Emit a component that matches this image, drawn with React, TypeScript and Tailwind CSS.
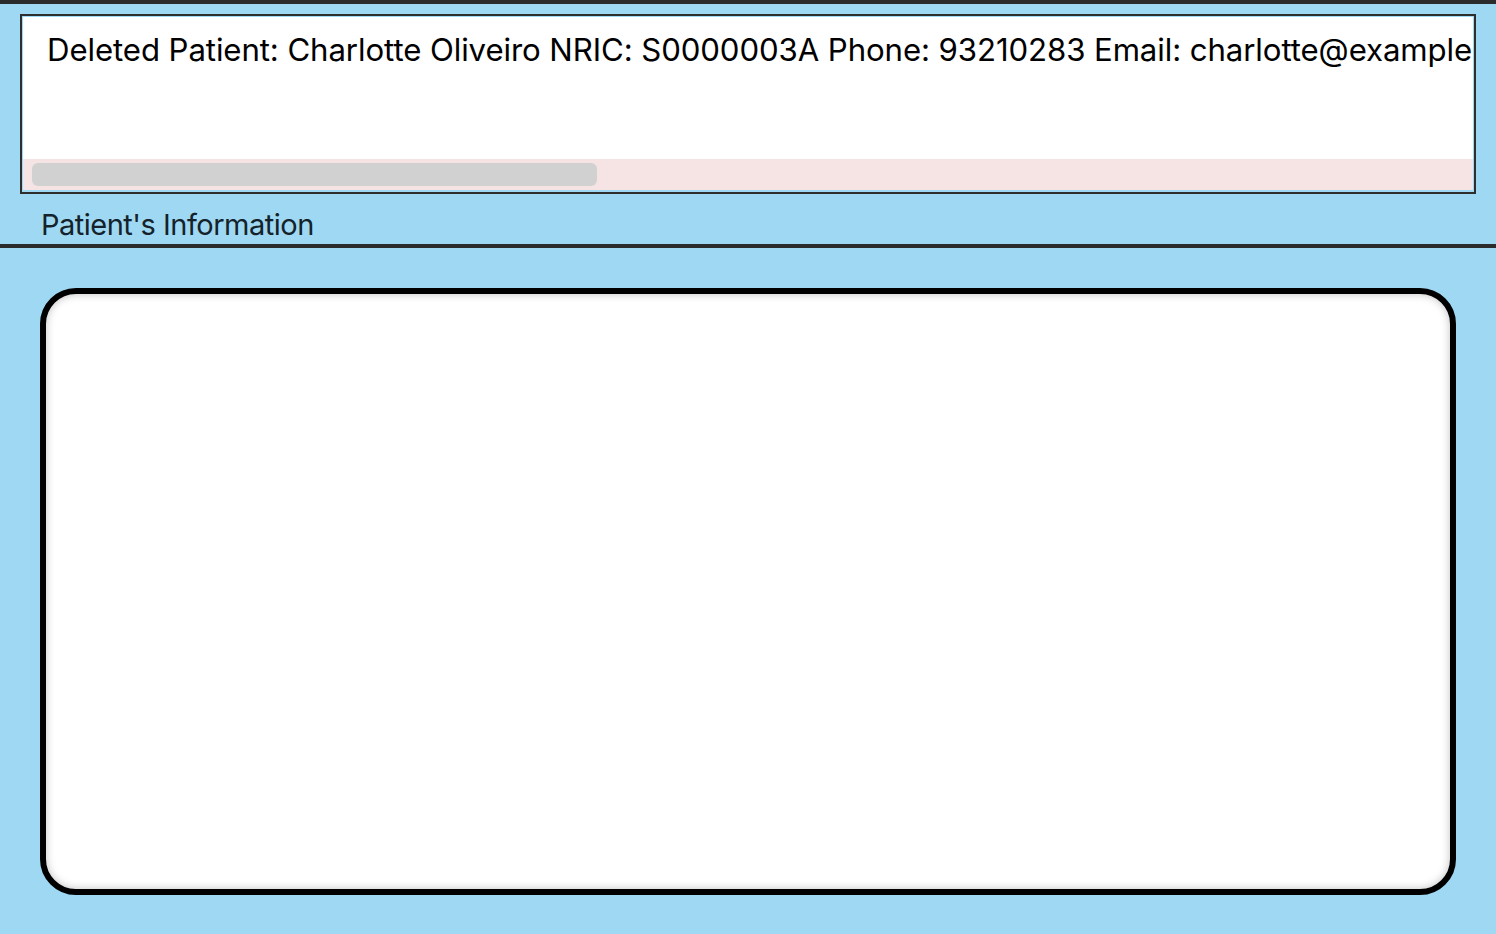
export default function App() {
  return (
    <div
      className="w-[1496px] h-[934px] bg-[#9fd8f2] flex flex-col overflow-hidden"
      style={{ fontFamily: "Inter, 'Noto Sans', sans-serif" }}
    >
      <div className="h-[4px] bg-[#2b2b2b] shrink-0" />

      {/* Result box */}
      <div className="mx-[20px] mt-[10px] h-[180px] border-[2px] border-[#2e2e2e] pt-px px-px pb-[2px] shrink-0">
        <div className="h-full bg-white flex flex-col overflow-hidden">
          <div className="flex-1 overflow-hidden pl-[24px] pt-[13px]">
            <p className="whitespace-nowrap text-[31.2px] leading-[40px] text-black tracking-[-0.1px]">
              Deleted Patient: Charlotte Oliveiro NRIC: S0000003A Phone: 93210283 Email: charlotte@example.com
            </p>
          </div>
          <div className="h-[31px] bg-[#f6e4e4] flex items-center px-[9px]">
            <div className="w-[565px] h-[23px] rounded-[6px] bg-[#d1d1d1]" />
          </div>
        </div>
      </div>

      {/* Section title */}
      <div className="h-[50px] pl-[41px] pt-[14px] shrink-0">
        <p className="text-[29px] leading-[34px] text-[#14232b] tracking-[-0.5px]">Patient's Information</p>
      </div>
      <div className="h-[4px] bg-[#2b2b2b] shrink-0" />

      {/* Detail card */}
      <div className="px-[40px] pt-[40px] pb-[39px] flex-1 flex">
        <div className="flex-1 rounded-[36px] border-[6px] border-black bg-white shadow-[inset_0_0_8px_rgba(0,0,0,0.25)]" />
      </div>
    </div>
  );
}
